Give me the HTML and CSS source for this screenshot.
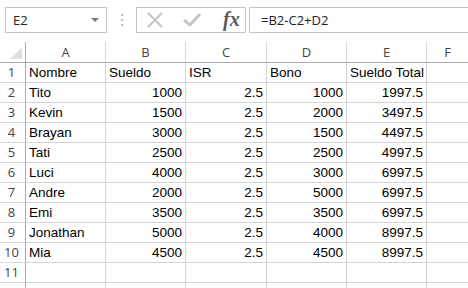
FILE: index.html
```html
<!DOCTYPE html>
<html lang="es">
<head>
    <meta charset="UTF-8">
    <title>Hoja de cálculo</title>
    <link rel="stylesheet" href="styles.css">
</head>
<body>

<div class="formula-bar">
    <div class="name-box">
        <span>E2</span>
        <span class="arrow"></span>
    </div>
    <div class="dots"><i></i><i></i><i></i></div>
    <div class="fx-box">
        <svg class="icon" width="18" height="16" viewBox="0 0 18 16">
            <path d="M2 1 L16 15 M16 1 L2 15" stroke="#c6c6c6" stroke-width="2" fill="none"/>
        </svg>
        <svg class="icon" width="20" height="16" viewBox="0 0 20 16">
            <path d="M2 8 L8 13 L18 2" stroke="#c6c6c6" stroke-width="3" fill="none"/>
        </svg>
        <span class="fx">fx</span>
    </div>
    <div class="formula">=B2-C2+D2</div>
</div>

<div class="sheet">
    <div class="corner">
        <svg width="12" height="12" viewBox="0 0 12 12"><path d="M12 0 L12 12 L0 12 Z" fill="#dfdfdf"/></svg>
    </div>
    <div class="col-head">A</div>
    <div class="col-head">B</div>
    <div class="col-head">C</div>
    <div class="col-head">D</div>
    <div class="col-head">E</div>
    <div class="col-head last">F</div>
</div>

<script>
    var rows = [
        ["Nombre", "Sueldo", "ISR", "Bono", "Sueldo Total"],
        ["Tito", 1000, 2.5, 1000, 1997.5],
        ["Kevin", 1500, 2.5, 2000, 3497.5],
        ["Brayan", 3000, 2.5, 1500, 4497.5],
        ["Tati", 2500, 2.5, 2500, 4997.5],
        ["Luci", 4000, 2.5, 3000, 6997.5],
        ["Andre", 2000, 2.5, 5000, 6997.5],
        ["Emi", 3500, 2.5, 3500, 6997.5],
        ["Jonathan", 5000, 2.5, 4000, 8997.5],
        ["Mia", 4500, 2.5, 4500, 8997.5],
        ["", "", "", "", ""],
        ["", "", "", "", ""]
    ];

    var sheet = document.querySelector(".sheet");
    rows.forEach(function (row, i) {
        var num = document.createElement("div");
        num.className = "row-head";
        // la fila 12 queda cortada por el borde, sin número visible
        num.textContent = i < 11 ? i + 1 : "";
        sheet.appendChild(num);

        row.concat([""]).forEach(function (value, j) {
            var cell = document.createElement("div");
            cell.className = "cell";
            if (typeof value === "number") cell.className += " num";
            if (j === 5) cell.className += " last";
            cell.textContent = value;
            sheet.appendChild(cell);
        });
    });
</script>

</body>
</html>
```

FILE: styles.css
```css
body {
    margin: 0;
    padding: 0;
    background-color: white;
    overflow: hidden;
}
.formula-bar {
    display: flex;
    align-items: center;
    height: 42px;
    padding-left: 5px;
    padding-bottom: 2px;
    box-sizing: border-box;
    font-family: "Open Sans", "Noto Sans", sans-serif;
    font-size: 13px;
    color: #222;
}
.name-box {
    display: flex;
    align-items: center;
    justify-content: space-between;
    width: 102px;
    height: 26px;
    box-sizing: border-box;
    border: 1px solid #c6c6c6;
    padding: 0 7px 0 7px;
}
.arrow {
    width: 0;
    height: 0;
    border-left: 4px solid transparent;
    border-right: 4px solid transparent;
    border-top: 4px solid #7a7a7a;
}
.dots {
    display: flex;
    flex-direction: column;
    gap: 3px;
    margin: 0 13px 0 14px;
}
.dots i {
    width: 2px;
    height: 2px;
    background-color: #bdbdbd;
}
.fx-box {
    display: flex;
    align-items: center;
    width: 110px;
    height: 26px;
    box-sizing: border-box;
    border: 1px solid #c6c6c6;
    padding-left: 9px;
}
.icon {
    margin-right: 18px;
}
.fx {
    font-family: "Liberation Serif", "DejaVu Serif", serif;
    font-style: italic;
    font-weight: bold;
    font-size: 20px;
    color: #5a5a5a;
    margin-top: -2px;
    margin-left: 3px;
}
.formula {
    flex: 1;
    height: 26px;
    line-height: 24px;
    box-sizing: border-box;
    border: 1px solid #c6c6c6;
    border-right: none;
    margin-left: 3px;
    padding-left: 11px;
}
.sheet {
    display: grid;
    grid-template-columns: 26px 80px 80px 81px 80px 80px 1fr;
    grid-auto-rows: 20px;
    grid-template-rows: 21px;
    font-family: "Liberation Sans", Arial, sans-serif;
    font-size: 13.5px;
    color: #000;
}
.corner {
    display: flex;
    align-items: flex-end;
    justify-content: flex-end;
    padding: 0 3px 3px 0;
    border-right: 1px solid #ababab;
    border-bottom: 1px solid #ababab;
}
.corner, .col-head, .row-head, .cell {
    box-sizing: border-box;
}
.col-head {
    text-align: center;
    font-family: "Open Sans", "Noto Sans", sans-serif;
    font-size: 13px;
    line-height: 20px;
    color: #444;
    border-right: 1px solid #d8d8d8;
    border-bottom: 1px solid #ababab;
}
.row-head {
    text-align: center;
    font-family: "Open Sans", "Noto Sans", sans-serif;
    font-size: 13px;
    line-height: 19px;
    color: #444;
    border-right: 1px solid #ababab;
    border-bottom: 1px solid #d8d8d8;
    padding-right: 2px;
}
.cell {
    line-height: 20px;
    padding: 0 3px;
    white-space: nowrap;
    overflow: hidden;
    border-right: 1px solid #d4d4d4;
    border-bottom: 1px solid #d4d4d4;
}
.cell.num {
    text-align: right;
}
.last {
    border-right: none;
}
```
